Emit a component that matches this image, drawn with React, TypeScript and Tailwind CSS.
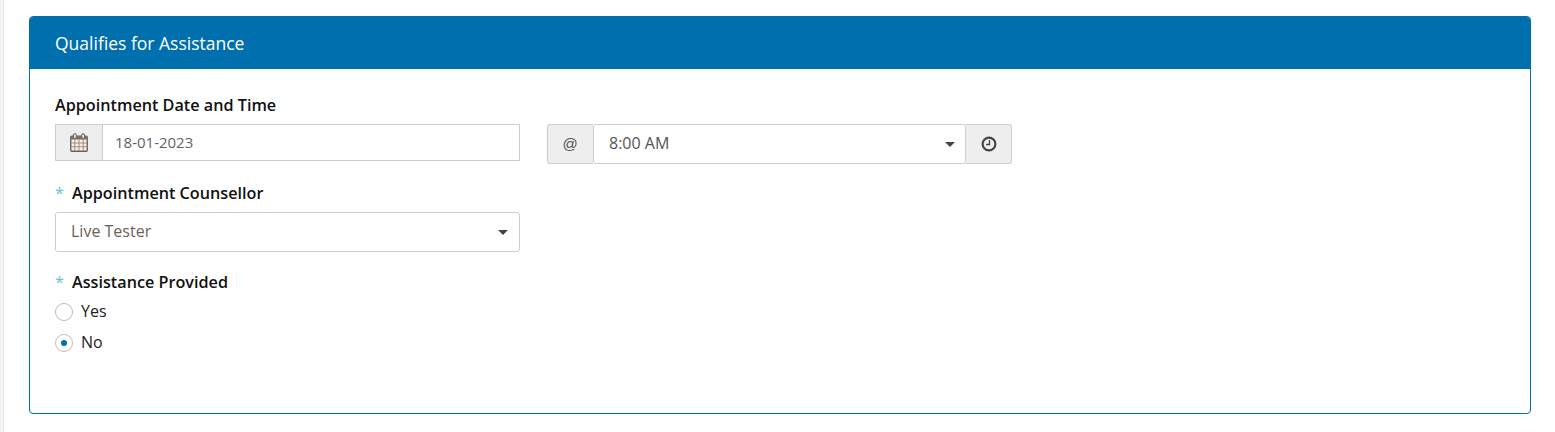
function CalendarIcon() {
  return (
    <svg width="18" height="19" viewBox="0 0 17 18" className="block">
      <rect x="0.700" y="3" width="15.600" height="14.300" rx="1" fill="#f6efe8" stroke="#6b5f5a" strokeWidth="1.300" />
      <rect x="1" y="3" width="15" height="3.200" fill="#7a6e68" />
      <rect x="3.300" y="0.700" width="2.600" height="4.600" rx="1.200" fill="#f6efe8" stroke="#6b5f5a" strokeWidth="1" />
      <rect x="11.100" y="0.700" width="2.600" height="4.600" rx="1.200" fill="#f6efe8" stroke="#6b5f5a" strokeWidth="1" />
      <path d="M1 9.500h15M1 13h15M4.500 6v11M8.500 6v11M12.500 6v11" stroke="#a08f88" strokeWidth="1" fill="none" />
    </svg>
  )
}

function ClockIcon() {
  return (
    <svg width="16" height="16" viewBox="0 0 16 16" className="block">
      <circle cx="8" cy="8" r="6.400" fill="none" stroke="#444444" strokeWidth="2.200" />
      <path d="M8.500 4v4.500H5" fill="none" stroke="#444444" strokeWidth="1.300" />
    </svg>
  )
}

function Caret() {
  return <span className="block w-0 h-0 border-x-[5px] border-x-transparent border-t-[5px] border-t-[#444444]" />
}

function Required({ text }: { text: string }) {
  return (
    <div className="flex items-center h-[22px] text-[16.2px] leading-[22px] font-semibold text-[#111111]">
      <span className="w-[17px] font-normal text-[#6bbfe0]">*</span>
      {text}
    </div>
  )
}

export default function App() {
  return (
    <div className="h-[432px] w-[1555px] overflow-hidden bg-white flex font-['Open_Sans',sans-serif]">
      <div className="w-[4px] h-full bg-[#f3f3f3] border-r border-[#e6e6e6]" />
      <div className="pl-[25px] pt-[16px]">
        <div className="w-[1502px] h-[398px] rounded-[4px] border border-[#006fad] overflow-hidden">
          <div className="h-[53px] bg-[#006fad] pl-[25px] pt-[2px] flex items-center text-white text-[17.5px] -mt-px">
            Qualifies for Assistance
          </div>
          <div className="pl-[25px] pt-[25px]">
            <div className="h-[22px] text-[16.2px] leading-[22px] font-semibold text-[#111111]">
              Appointment Date and Time
            </div>
            <div className="flex items-start gap-[27px] mt-[8px]">
              <div className="flex w-[465px] h-[37px] border border-[#cccccc] text-[15px] text-[#5f6368]">
                <div className="w-[47px] bg-[#eeeeee] border-r border-[#cccccc] flex items-center justify-center">
                  <CalendarIcon />
                </div>
                <div className="flex-1 pl-[12px] flex items-center">18-01-2023</div>
              </div>
              <div className="flex w-[465px] h-[40px] text-[#555555]">
                <div className="w-[46px] bg-[#eeeeee] border border-r-0 border-[#cccccc] rounded-l-[3px] flex items-center justify-center text-[15px] font-['Liberation_Sans',sans-serif] pr-px">
                  @
                </div>
                <div className="flex-1 border border-[#cccccc] rounded-[3px] flex items-center justify-between pl-[15px] pr-[10px] text-[16px]">
                  <span className="-mt-[2px]">8:00 AM</span>
                  <Caret />
                </div>
                <div className="w-[46px] bg-[#eeeeee] border border-l-0 border-[#cccccc] rounded-r-[3px] flex items-center justify-center">
                  <ClockIcon />
                </div>
              </div>
            </div>
            <div className="mt-[18px]">
              <Required text="Appointment Counsellor" />
            </div>
            <div className="w-[465px] h-[40px] mt-[8px] border border-[#cccccc] rounded-[3px] flex items-center justify-between pl-[15px] pr-[11px] text-[16px] text-[#6b5f5a]">
              <span className="-mt-[2px]">Live Tester</span>
              <Caret />
            </div>
            <div className="mt-[19px]">
              <Required text="Assistance Provided" />
            </div>
            <div className="flex items-center h-[31px] mt-[3px] text-[16px] text-[#222222]">
              <span className="w-[18px] h-[18px] rounded-full border border-[#bdbdbd] bg-white" />
              <span className="ml-[8px] -mt-[2px]">Yes</span>
            </div>
            <div className="flex items-center h-[31px] text-[16px] text-[#222222]">
              <span className="w-[18px] h-[18px] rounded-full border border-[#bdbdbd] bg-white flex items-center justify-center">
                <span className="w-[6px] h-[6px] rounded-full bg-[#006fad]" />
              </span>
              <span className="ml-[8px] -mt-[2px]">No</span>
            </div>
          </div>
        </div>
      </div>
    </div>
  )
}
